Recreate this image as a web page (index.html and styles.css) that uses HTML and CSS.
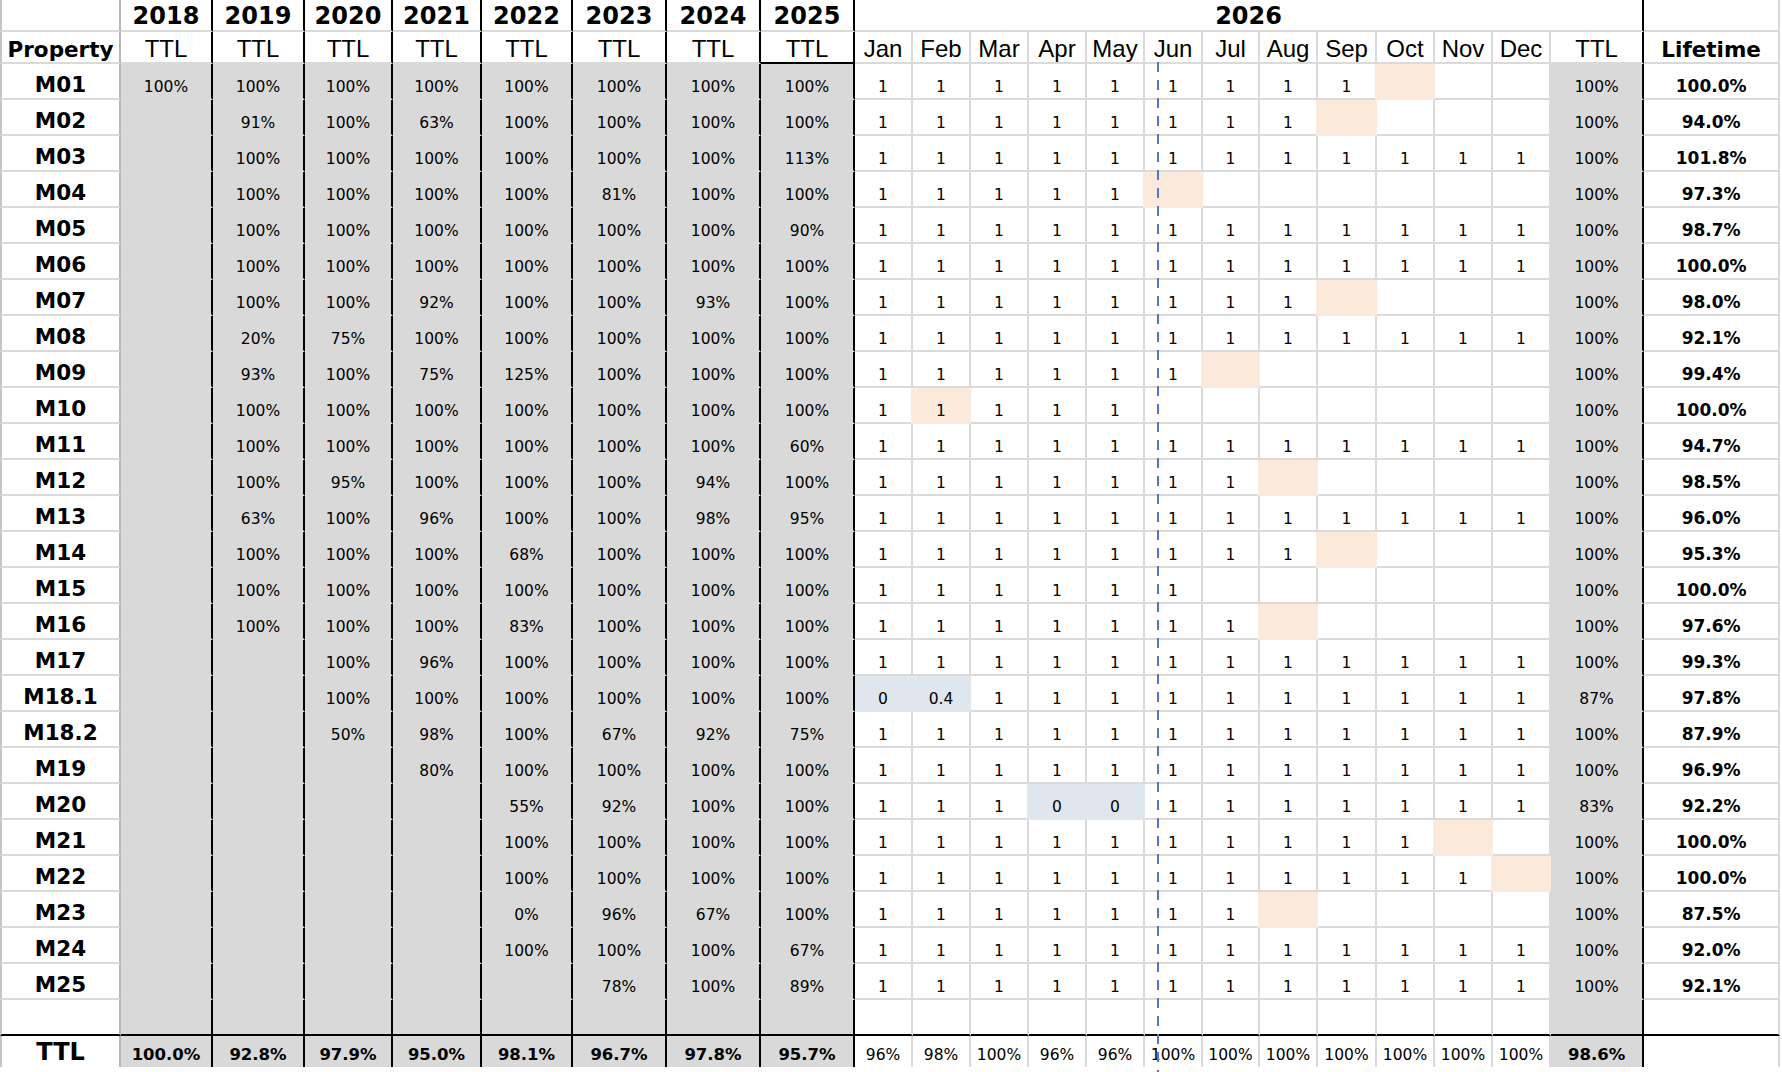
FILE: index.html
```html
<!DOCTYPE html>
<html lang="en">
<head>
<meta charset="utf-8">
<title>Property occupancy 2018–2026</title>
<link rel="stylesheet" href="styles.css">
</head>
<body>
<div class="sheet">
<table class="grid">
<colgroup>
<col class="c-prop"><col class="c-y18"><col class="c-y19"><col class="c-y20"><col class="c-y21"><col class="c-y22"><col class="c-y23"><col class="c-y24"><col class="c-y25">
<col class="c-mo"><col class="c-mo"><col class="c-mo"><col class="c-mo"><col class="c-mo"><col class="c-mo"><col class="c-mo57"><col class="c-mo"><col class="c-mo59"><col class="c-mo"><col class="c-mo"><col class="c-mo">
<col class="c-ttl"><col class="c-life">
</colgroup>
<thead>
<tr class="h1"><th class="p"></th><th class="yh">2018</th><th class="yh">2019</th><th class="yh">2020</th><th class="yh">2021</th><th class="yh">2022</th><th class="yh">2023</th><th class="yh">2024</th><th class="yh">2025</th><th class="yh" colspan="13">2026</th><th></th></tr>
<tr class="h2"><th class="p ph">Property</th><th class="yh">TTL</th><th class="yh">TTL</th><th class="yh">TTL</th><th class="yh">TTL</th><th class="yh">TTL</th><th class="yh">TTL</th><th class="yh">TTL</th><th class="yh y25">TTL</th><th>Jan</th><th>Feb</th><th>Mar</th><th>Apr</th><th>May</th><th>Jun</th><th>Jul</th><th>Aug</th><th>Sep</th><th>Oct</th><th>Nov</th><th>Dec</th><th class="yh">TTL</th><th class="ph">Lifetime</th></tr>
</thead>
<tbody>
<tr class="r"><td class="p">M01</td><td class="y">100%</td><td class="y">100%</td><td class="y">100%</td><td class="y">100%</td><td class="y">100%</td><td class="y">100%</td><td class="y">100%</td><td class="y">100%</td><td>1</td><td>1</td><td>1</td><td>1</td><td>1</td><td>1</td><td>1</td><td>1</td><td>1</td><td class="pe"></td><td></td><td></td><td class="t">100%</td><td class="lf">100.0%</td></tr>
<tr class="r"><td class="p">M02</td><td class="y"></td><td class="y">91%</td><td class="y">100%</td><td class="y">63%</td><td class="y">100%</td><td class="y">100%</td><td class="y">100%</td><td class="y">100%</td><td>1</td><td>1</td><td>1</td><td>1</td><td>1</td><td>1</td><td>1</td><td>1</td><td class="pe"></td><td></td><td></td><td></td><td class="t">100%</td><td class="lf">94.0%</td></tr>
<tr class="r"><td class="p">M03</td><td class="y"></td><td class="y">100%</td><td class="y">100%</td><td class="y">100%</td><td class="y">100%</td><td class="y">100%</td><td class="y">100%</td><td class="y">113%</td><td>1</td><td>1</td><td>1</td><td>1</td><td>1</td><td>1</td><td>1</td><td>1</td><td>1</td><td>1</td><td>1</td><td>1</td><td class="t">100%</td><td class="lf">101.8%</td></tr>
<tr class="r"><td class="p">M04</td><td class="y"></td><td class="y">100%</td><td class="y">100%</td><td class="y">100%</td><td class="y">100%</td><td class="y">81%</td><td class="y">100%</td><td class="y">100%</td><td>1</td><td>1</td><td>1</td><td>1</td><td>1</td><td class="pe"></td><td></td><td></td><td></td><td></td><td></td><td></td><td class="t">100%</td><td class="lf">97.3%</td></tr>
<tr class="r"><td class="p">M05</td><td class="y"></td><td class="y">100%</td><td class="y">100%</td><td class="y">100%</td><td class="y">100%</td><td class="y">100%</td><td class="y">100%</td><td class="y">90%</td><td>1</td><td>1</td><td>1</td><td>1</td><td>1</td><td>1</td><td>1</td><td>1</td><td>1</td><td>1</td><td>1</td><td>1</td><td class="t">100%</td><td class="lf">98.7%</td></tr>
<tr class="r"><td class="p">M06</td><td class="y"></td><td class="y">100%</td><td class="y">100%</td><td class="y">100%</td><td class="y">100%</td><td class="y">100%</td><td class="y">100%</td><td class="y">100%</td><td>1</td><td>1</td><td>1</td><td>1</td><td>1</td><td>1</td><td>1</td><td>1</td><td>1</td><td>1</td><td>1</td><td>1</td><td class="t">100%</td><td class="lf">100.0%</td></tr>
<tr class="r"><td class="p">M07</td><td class="y"></td><td class="y">100%</td><td class="y">100%</td><td class="y">92%</td><td class="y">100%</td><td class="y">100%</td><td class="y">93%</td><td class="y">100%</td><td>1</td><td>1</td><td>1</td><td>1</td><td>1</td><td>1</td><td>1</td><td>1</td><td class="pe"></td><td></td><td></td><td></td><td class="t">100%</td><td class="lf">98.0%</td></tr>
<tr class="r"><td class="p">M08</td><td class="y"></td><td class="y">20%</td><td class="y">75%</td><td class="y">100%</td><td class="y">100%</td><td class="y">100%</td><td class="y">100%</td><td class="y">100%</td><td>1</td><td>1</td><td>1</td><td>1</td><td>1</td><td>1</td><td>1</td><td>1</td><td>1</td><td>1</td><td>1</td><td>1</td><td class="t">100%</td><td class="lf">92.1%</td></tr>
<tr class="r"><td class="p">M09</td><td class="y"></td><td class="y">93%</td><td class="y">100%</td><td class="y">75%</td><td class="y">125%</td><td class="y">100%</td><td class="y">100%</td><td class="y">100%</td><td>1</td><td>1</td><td>1</td><td>1</td><td>1</td><td>1</td><td class="pe"></td><td></td><td></td><td></td><td></td><td></td><td class="t">100%</td><td class="lf">99.4%</td></tr>
<tr class="r"><td class="p">M10</td><td class="y"></td><td class="y">100%</td><td class="y">100%</td><td class="y">100%</td><td class="y">100%</td><td class="y">100%</td><td class="y">100%</td><td class="y">100%</td><td>1</td><td class="pe">1</td><td>1</td><td>1</td><td>1</td><td></td><td></td><td></td><td></td><td></td><td></td><td></td><td class="t">100%</td><td class="lf">100.0%</td></tr>
<tr class="r"><td class="p">M11</td><td class="y"></td><td class="y">100%</td><td class="y">100%</td><td class="y">100%</td><td class="y">100%</td><td class="y">100%</td><td class="y">100%</td><td class="y">60%</td><td>1</td><td>1</td><td>1</td><td>1</td><td>1</td><td>1</td><td>1</td><td>1</td><td>1</td><td>1</td><td>1</td><td>1</td><td class="t">100%</td><td class="lf">94.7%</td></tr>
<tr class="r"><td class="p">M12</td><td class="y"></td><td class="y">100%</td><td class="y">95%</td><td class="y">100%</td><td class="y">100%</td><td class="y">100%</td><td class="y">94%</td><td class="y">100%</td><td>1</td><td>1</td><td>1</td><td>1</td><td>1</td><td>1</td><td>1</td><td class="pe"></td><td></td><td></td><td></td><td></td><td class="t">100%</td><td class="lf">98.5%</td></tr>
<tr class="r"><td class="p">M13</td><td class="y"></td><td class="y">63%</td><td class="y">100%</td><td class="y">96%</td><td class="y">100%</td><td class="y">100%</td><td class="y">98%</td><td class="y">95%</td><td>1</td><td>1</td><td>1</td><td>1</td><td>1</td><td>1</td><td>1</td><td>1</td><td>1</td><td>1</td><td>1</td><td>1</td><td class="t">100%</td><td class="lf">96.0%</td></tr>
<tr class="r"><td class="p">M14</td><td class="y"></td><td class="y">100%</td><td class="y">100%</td><td class="y">100%</td><td class="y">68%</td><td class="y">100%</td><td class="y">100%</td><td class="y">100%</td><td>1</td><td>1</td><td>1</td><td>1</td><td>1</td><td>1</td><td>1</td><td>1</td><td class="pe"></td><td></td><td></td><td></td><td class="t">100%</td><td class="lf">95.3%</td></tr>
<tr class="r"><td class="p">M15</td><td class="y"></td><td class="y">100%</td><td class="y">100%</td><td class="y">100%</td><td class="y">100%</td><td class="y">100%</td><td class="y">100%</td><td class="y">100%</td><td>1</td><td>1</td><td>1</td><td>1</td><td>1</td><td>1</td><td></td><td></td><td></td><td></td><td></td><td></td><td class="t">100%</td><td class="lf">100.0%</td></tr>
<tr class="r"><td class="p">M16</td><td class="y"></td><td class="y">100%</td><td class="y">100%</td><td class="y">100%</td><td class="y">83%</td><td class="y">100%</td><td class="y">100%</td><td class="y">100%</td><td>1</td><td>1</td><td>1</td><td>1</td><td>1</td><td>1</td><td>1</td><td class="pe"></td><td></td><td></td><td></td><td></td><td class="t">100%</td><td class="lf">97.6%</td></tr>
<tr class="r"><td class="p">M17</td><td class="y"></td><td class="y"></td><td class="y">100%</td><td class="y">96%</td><td class="y">100%</td><td class="y">100%</td><td class="y">100%</td><td class="y">100%</td><td>1</td><td>1</td><td>1</td><td>1</td><td>1</td><td>1</td><td>1</td><td>1</td><td>1</td><td>1</td><td>1</td><td>1</td><td class="t">100%</td><td class="lf">99.3%</td></tr>
<tr class="r"><td class="p">M18.1</td><td class="y"></td><td class="y"></td><td class="y">100%</td><td class="y">100%</td><td class="y">100%</td><td class="y">100%</td><td class="y">100%</td><td class="y">100%</td><td class="bl first">0</td><td class="bl">0.4</td><td>1</td><td>1</td><td>1</td><td>1</td><td>1</td><td>1</td><td>1</td><td>1</td><td>1</td><td>1</td><td class="t">87%</td><td class="lf">97.8%</td></tr>
<tr class="r"><td class="p">M18.2</td><td class="y"></td><td class="y"></td><td class="y">50%</td><td class="y">98%</td><td class="y">100%</td><td class="y">67%</td><td class="y">92%</td><td class="y">75%</td><td>1</td><td>1</td><td>1</td><td>1</td><td>1</td><td>1</td><td>1</td><td>1</td><td>1</td><td>1</td><td>1</td><td>1</td><td class="t">100%</td><td class="lf">87.9%</td></tr>
<tr class="r"><td class="p">M19</td><td class="y"></td><td class="y"></td><td class="y"></td><td class="y">80%</td><td class="y">100%</td><td class="y">100%</td><td class="y">100%</td><td class="y">100%</td><td>1</td><td>1</td><td>1</td><td>1</td><td>1</td><td>1</td><td>1</td><td>1</td><td>1</td><td>1</td><td>1</td><td>1</td><td class="t">100%</td><td class="lf">96.9%</td></tr>
<tr class="r"><td class="p">M20</td><td class="y"></td><td class="y"></td><td class="y"></td><td class="y"></td><td class="y">55%</td><td class="y">92%</td><td class="y">100%</td><td class="y">100%</td><td>1</td><td>1</td><td>1</td><td class="bl">0</td><td class="bl">0</td><td>1</td><td>1</td><td>1</td><td>1</td><td>1</td><td>1</td><td>1</td><td class="t">83%</td><td class="lf">92.2%</td></tr>
<tr class="r"><td class="p">M21</td><td class="y"></td><td class="y"></td><td class="y"></td><td class="y"></td><td class="y">100%</td><td class="y">100%</td><td class="y">100%</td><td class="y">100%</td><td>1</td><td>1</td><td>1</td><td>1</td><td>1</td><td>1</td><td>1</td><td>1</td><td>1</td><td>1</td><td class="pe"></td><td></td><td class="t">100%</td><td class="lf">100.0%</td></tr>
<tr class="r"><td class="p">M22</td><td class="y"></td><td class="y"></td><td class="y"></td><td class="y"></td><td class="y">100%</td><td class="y">100%</td><td class="y">100%</td><td class="y">100%</td><td>1</td><td>1</td><td>1</td><td>1</td><td>1</td><td>1</td><td>1</td><td>1</td><td>1</td><td>1</td><td>1</td><td class="pe"></td><td class="t">100%</td><td class="lf">100.0%</td></tr>
<tr class="r"><td class="p">M23</td><td class="y"></td><td class="y"></td><td class="y"></td><td class="y"></td><td class="y">0%</td><td class="y">96%</td><td class="y">67%</td><td class="y">100%</td><td>1</td><td>1</td><td>1</td><td>1</td><td>1</td><td>1</td><td>1</td><td class="pe"></td><td></td><td></td><td></td><td></td><td class="t">100%</td><td class="lf">87.5%</td></tr>
<tr class="r"><td class="p">M24</td><td class="y"></td><td class="y"></td><td class="y"></td><td class="y"></td><td class="y">100%</td><td class="y">100%</td><td class="y">100%</td><td class="y">67%</td><td>1</td><td>1</td><td>1</td><td>1</td><td>1</td><td>1</td><td>1</td><td>1</td><td>1</td><td>1</td><td>1</td><td>1</td><td class="t">100%</td><td class="lf">92.0%</td></tr>
<tr class="r"><td class="p">M25</td><td class="y"></td><td class="y"></td><td class="y"></td><td class="y"></td><td class="y"></td><td class="y">78%</td><td class="y">100%</td><td class="y">89%</td><td>1</td><td>1</td><td>1</td><td>1</td><td>1</td><td>1</td><td>1</td><td>1</td><td>1</td><td>1</td><td>1</td><td>1</td><td class="t">100%</td><td class="lf">92.1%</td></tr>
<tr class="r end"><td class="p"></td><td class="y"></td><td class="y"></td><td class="y"></td><td class="y"></td><td class="y"></td><td class="y"></td><td class="y"></td><td class="y"></td><td></td><td></td><td></td><td></td><td></td><td></td><td></td><td></td><td></td><td></td><td></td><td></td><td class="t"></td><td class="lf"></td></tr>
</tbody>
<tfoot>
<tr class="tot"><td class="p">TTL</td><td class="y">100.0%</td><td class="y">92.8%</td><td class="y">97.9%</td><td class="y">95.0%</td><td class="y">98.1%</td><td class="y">96.7%</td><td class="y">97.8%</td><td class="y">95.7%</td><td>96%</td><td>98%</td><td>100%</td><td>96%</td><td>96%</td><td>100%</td><td>100%</td><td>100%</td><td>100%</td><td>100%</td><td>100%</td><td>100%</td><td class="t">98.6%</td><td class="lf"></td></tr>
</tfoot>
</table>
<div class="today-line"></div>
</div>
</body>
</html>
```
FILE: styles.css
```css
* { box-sizing: border-box; }

html, body {
  margin: 0;
  padding: 0;
  background: #ffffff;
}

.sheet {
  position: relative;
  width: 1782px;
  height: 1072px;
  overflow: hidden;
}

.grid {
  table-layout: fixed;
  width: 1780px;
  border-collapse: separate;
  border-spacing: 0;
  font-family: "DejaVu Sans", Verdana, sans-serif;
  color: #000;
}

/* column widths */
.c-prop { width: 121px; }
.c-y18 { width: 92px; }
.c-y19 { width: 92px; }
.c-y20 { width: 88px; }
.c-y21 { width: 89px; }
.c-y22 { width: 91px; }
.c-y23 { width: 94px; }
.c-y24 { width: 94px; }
.c-y25 { width: 94px; }
.c-mo { width: 58px; }
.c-mo57 { width: 57px; }
.c-mo59 { width: 59px; }
.c-ttl { width: 93px; }
.c-life { width: 136px; }

.grid th,
.grid td {
  padding: 0;
  border-right: 2px solid #dadada;
  border-bottom: 2px solid #dadada;
  text-align: center;
  vertical-align: bottom;
  white-space: nowrap;
  overflow: hidden;
  font-weight: normal;
}

/* property label column */
.grid .p {
  border-left: 2px solid #c4c4c4;
  border-right: 2px solid #b6b6b6;
  font-weight: bold;
}

/* header row 1: years */
.h1 { height: 32px; }
.grid .h1 th {
  font: bold 24px/24px "DejaVu Sans", Verdana, sans-serif;
  padding-bottom: 2px;
}

/* header row 2 */
.h2 { height: 32px; }
.grid .h2 th {
  font: 24px/24px "Liberation Sans", Arial, Helvetica, sans-serif;
  padding-bottom: 1px;
}
.grid .h2 th.ph {
  font: bold 21.5px/24px "DejaVu Sans", Verdana, sans-serif;
  padding-bottom: 0;
}
.grid .yh { border-right: 2px solid #000; }
.grid .h2 .y25 { border-bottom: 2px solid #000; }

/* data rows */
.r { height: 36px; }
.grid .r td {
  font-size: 15.5px;
  line-height: 18px;
  padding-bottom: 2.5px;
}
.grid .r td.p {
  font-size: 21.5px;
  padding-bottom: 4.5px;
}
.grid .r td.lf {
  font-size: 17px;
  font-weight: bold;
  padding-bottom: 3px;
}

/* grey filled year and yearly total columns */
.grid .y,
.grid .t {
  background: #d9d9d9;
  border-right: 2px solid #000;
  border-bottom-color: transparent;
}

/* highlighted month cells */
.grid .pe {
  background: #fbeadc;
  border-right-color: transparent;
  border-bottom-color: transparent;
  box-shadow: -2px 0 0 #fbeadc;
}
.grid .bl {
  background: #dfe6ee;
  border-right-color: transparent;
  border-bottom-color: transparent;
  box-shadow: -2px 0 0 #dfe6ee;
}
.grid .bl.first { box-shadow: none; }

/* separator above totals */
.grid .end td { border-bottom: 2px solid #000; }

/* totals row */
.tot { height: 31px; }
.grid .tot td {
  border-bottom: 0;
  font-size: 15.5px;
  line-height: 18px;
  padding-bottom: 3.5px;
}
.grid .tot td.y,
.grid .tot td.t {
  font-size: 16.5px;
  font-weight: bold;
  padding-bottom: 3.5px;
}
.grid .tot td.p {
  font-size: 24px;
  line-height: 24px;
  padding-bottom: 3px;
}

/* current-month marker */
.today-line {
  position: absolute;
  left: 1157px;
  top: 62px;
  bottom: 0;
  width: 2px;
  background: repeating-linear-gradient(to bottom, #4e79c5 0 10px, transparent 10px 18px);
}
```
